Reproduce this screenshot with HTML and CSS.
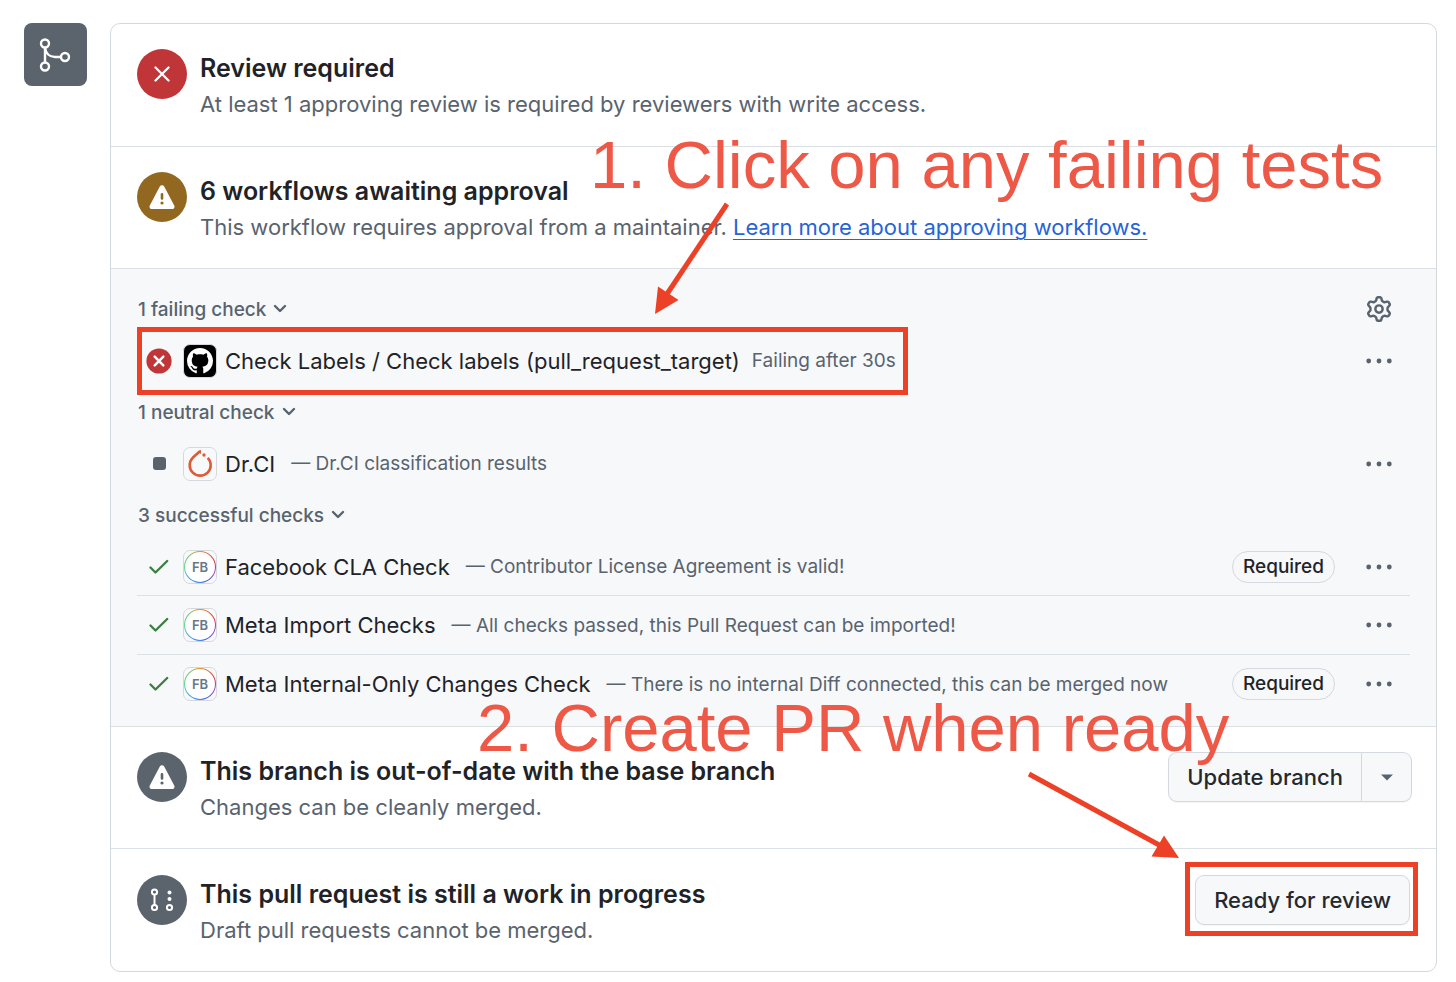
FILE: index.html
```html
<!DOCTYPE html>
<html lang="en">
<head>
<meta charset="utf-8">
<title>Merge status</title>
<link rel="stylesheet" href="styles.css">
</head>
<body>
<svg class="defs" aria-hidden="true">
  <defs>
    <symbol id="chevron" viewBox="0 0 14 10"><path d="M2 2l5 5 5-5" fill="none" stroke="currentColor" stroke-width="2.4" stroke-linecap="round" stroke-linejoin="round"/></symbol>
    <symbol id="kebab" viewBox="0 0 28 8"><circle cx="3.7" cy="4" r="2.4"/><circle cx="14" cy="4" r="2.4"/><circle cx="24.3" cy="4" r="2.4"/></symbol>
    <symbol id="check" viewBox="0 0 20 16"><path d="M1.5 8.500l5 5L18.200 2" fill="none" stroke="currentColor" stroke-width="2.3" stroke-linecap="round" stroke-linejoin="round"/></symbol>
    <symbol id="alert" viewBox="0 0 26 25"><path fill-rule="evenodd" d="M10.800 1.500a2.500 2.500 0 0 1 4.400 0L25.200 20.400a2.500 2.500 0 0 1-2.200 3.700H3a2.500 2.500 0 0 1-2.200-3.700ZM13 8a1.300 1.300 0 0 0-1.300 1.300v4.200a1.300 1.300 0 0 0 2.600 0V9.300A1.300 1.300 0 0 0 13 8Zm0 8.400a1.600 1.600 0 1 0 0 3.200 1.600 1.600 0 0 0 0-3.200Z"/></symbol>
  </defs>
</svg>

<main class="merge">
  <div class="merge-badge">
    <svg viewBox="0 0 63 63" fill="none" stroke="currentColor" stroke-width="2.4"><circle cx="21" cy="20.5" r="4"/><circle cx="21" cy="43.5" r="4"/><circle cx="41" cy="34" r="4"/><path d="M21 24.500v15M21 24.500c.6 5.700 4.500 9.500 10 9.500h6"/></svg>
  </div>

  <div class="panel">
    <section class="row">
      <span class="status status-danger"><svg class="icon-x" viewBox="0 0 16 16"><path d="M1.500 1.500l13 13M14.500 1.500l-13 13" stroke="currentColor" stroke-width="2.3" stroke-linecap="round"/></svg></span>
      <div class="row-text">
        <h2>Review required</h2>
        <p>At least 1 approving review is required by reviewers with write access.</p>
      </div>
    </section>

    <section class="row">
      <span class="status status-attention"><svg class="icon-alert"><use href="#alert"/></svg></span>
      <div class="row-text">
        <h2>6 workflows awaiting approval</h2>
        <p>This workflow requires approval from a maintainer. <a href="#">Learn more about approving workflows.</a></p>
      </div>
    </section>

    <section class="checks">
      <div class="checks-head">
        <button class="toggle">1 failing check <svg><use href="#chevron"/></svg></button>
        <button class="icon-button" aria-label="Settings"><svg class="icon-gear" viewBox="0 0 16 16"><path d="M8 0a8.200 8.200 0 0 1 .701.031C9.444.095 9.990.645 10.160 1.290l.288 1.107c.018.066.079.158.212.224.231.114.454.243.668.386.123.082.233.090.299.071l1.103-.303c.644-.176 1.392.021 1.820.630.270.385.506.792.704 1.218.315.675.111 1.422-.364 1.891l-.814.806c-.049.048-.098.147-.088.294.016.257.016.515 0 .772-.010.147.038.246.088.294l.814.806c.475.469.679 1.216.364 1.891a7.977 7.977 0 0 1-.704 1.217c-.428.610-1.176.807-1.820.630l-1.102-.302c-.067-.019-.177-.011-.300.071a5.909 5.909 0 0 1-.668.386c-.133.066-.194.158-.211.224l-.290 1.106c-.168.646-.715 1.196-1.458 1.260a8.006 8.006 0 0 1-1.402 0c-.743-.064-1.289-.614-1.458-1.260l-.289-1.106c-.018-.066-.079-.158-.212-.224a5.738 5.738 0 0 1-.668-.386c-.123-.082-.233-.090-.299-.071l-1.103.303c-.644.176-1.392-.021-1.820-.630a8.120 8.120 0 0 1-.704-1.218c-.315-.675-.111-1.422.363-1.891l.815-.806c.050-.048.098-.147.088-.294a6.214 6.214 0 0 1 0-.772c.010-.147-.038-.246-.088-.294l-.815-.806C.635 6.045.431 5.298.746 4.623a7.920 7.920 0 0 1 .704-1.217c.428-.610 1.176-.807 1.820-.630l1.102.302c.067.019.177.011.300-.071.214-.143.437-.272.668-.386.133-.066.194-.158.211-.224l.290-1.106C6.009.645 6.556.095 7.299.030 7.530.010 7.764 0 8 0Zm-.571 1.525c-.036.003-.108.036-.137.146l-.289 1.105c-.147.561-.549.967-.998 1.189-.173.086-.340.183-.500.290-.417.278-.970.423-1.529.270l-1.103-.303c-.109-.030-.175.016-.195.045-.220.312-.412.644-.573.990-.014.031-.021.110.059.190l.815.806c.411.406.562.957.530 1.456a4.709 4.709 0 0 0 0 .582c.032.499-.119 1.050-.530 1.456l-.815.806c-.081.080-.073.159-.059.190.162.346.353.677.573.989.020.030.085.076.195.046l1.102-.303c.560-.153 1.113-.008 1.530.270.161.107.328.204.501.290.447.222.850.629.997 1.189l.289 1.105c.029.109.101.143.137.146a6.600 6.600 0 0 0 1.142 0c.036-.003.108-.036.137-.146l.289-1.105c.147-.561.549-.967.998-1.189.173-.086.340-.183.500-.290.417-.278.970-.423 1.529-.270l1.103.303c.109.029.175-.016.195-.045.220-.313.411-.644.573-.990.014-.031.021-.110-.059-.190l-.815-.806c-.411-.406-.562-.957-.530-1.456a4.709 4.709 0 0 0 0-.582c-.032-.499.119-1.050.530-1.456l.815-.806c.081-.080.073-.159.059-.190a6.464 6.464 0 0 0-.573-.989c-.020-.030-.085-.076-.195-.046l-1.102.303c-.560.153-1.113.008-1.530-.270a4.440 4.440 0 0 0-.501-.290c-.447-.222-.850-.629-.997-1.189l-.289-1.105c-.029-.110-.101-.143-.137-.146a6.600 6.600 0 0 0-1.142 0ZM11 8a3 3 0 1 1-6 0 3 3 0 0 1 6 0ZM9.500 8a1.500 1.500 0 1 0-3.001.001A1.500 1.500 0 0 0 9.500 8Z"/></svg></button>
      </div>
      <ul class="check-list">
        <li class="check">
          <div class="check-main marked">
            <span class="mark"><svg class="icon-fail" viewBox="0 0 26 26"><circle cx="13" cy="13" r="12.6" fill="#bf3538"/><path d="M8.700 8.700l8.600 8.600M17.300 8.700l-8.600 8.600" stroke="#fff" stroke-width="2.5" stroke-linecap="round"/></svg></span>
            <span class="avatar avatar-github"><svg viewBox="0 0 16 16"><path d="M8 0c4.420 0 8 3.580 8 8a8.013 8.013 0 0 1-5.450 7.590c-.4.080-.55-.17-.55-.38 0-.27.010-1.130.010-2.200 0-.75-.25-1.230-.54-1.480 1.780-.2 3.650-.88 3.650-3.950 0-.88-.31-1.590-.82-2.150.080-.2.360-1.020-.08-2.120 0 0-.67-.22-2.200.820-.64-.18-1.320-.27-2-.27-.68 0-1.360.090-2 .27-1.530-1.030-2.200-.82-2.200-.82-.44 1.100-.16 1.920-.08 2.120-.51.560-.82 1.280-.82 2.150 0 3.060 1.860 3.750 3.640 3.950-.23.200-.44.550-.51 1.070-.46.210-1.610.550-2.330-.66-.15-.24-.6-.83-1.230-.82-.67.010-.27.380.010.530.340.190.730.900.820 1.130.160.450.680 1.310 2.690.940 0 .67.010 1.300.010 1.490 0 .210-.15.450-.55.380A7.995 7.995 0 0 1 0 8c0-4.420 3.580-8 8-8Z"/></svg></span>
            <span class="name">Check Labels / Check labels (pull_request_target)</span>
            <span class="desc desc-near">Failing after 30s</span>
          </div>
          <button class="icon-button" aria-label="More options"><svg class="icon-kebab"><use href="#kebab"/></svg></button>
        </li>
      </ul>

      <div class="checks-head">
        <button class="toggle">1 neutral check <svg><use href="#chevron"/></svg></button>
      </div>
      <ul class="check-list">
        <li class="check">
          <div class="check-main">
            <span class="mark"><span class="neutral"></span></span>
            <span class="avatar"><svg viewBox="0 0 32 32"><path d="M16.200 3L8.700 9.800a10.500 10.500 0 1 0 15 0" fill="none" stroke="#de5b35" stroke-width="2.6"/><path d="M14.200 4.500l2.800-3v4.500z" fill="#de5b35"/><circle cx="20" cy="7" r="1.7" fill="#de5b35"/></svg></span>
            <span class="name">Dr.CI</span>
            <span class="desc">— Dr.CI classification results</span>
          </div>
          <button class="icon-button" aria-label="More options"><svg class="icon-kebab"><use href="#kebab"/></svg></button>
        </li>
      </ul>

      <div class="checks-head">
        <button class="toggle">3 successful checks <svg><use href="#chevron"/></svg></button>
      </div>
      <ul class="check-list">
        <li class="check">
          <div class="check-main">
            <span class="mark"><svg class="icon-check"><use href="#check"/></svg></span>
            <span class="avatar"><span class="ring"><span>FB</span></span></span>
            <span class="name">Facebook CLA Check</span>
            <span class="desc">— Contributor License Agreement is valid!</span>
          </div>
          <span class="label">Required</span>
          <button class="icon-button" aria-label="More options"><svg class="icon-kebab"><use href="#kebab"/></svg></button>
        </li>
        <li class="check">
          <div class="check-main">
            <span class="mark"><svg class="icon-check"><use href="#check"/></svg></span>
            <span class="avatar"><span class="ring"><span>FB</span></span></span>
            <span class="name">Meta Import Checks</span>
            <span class="desc">— All checks passed, this Pull Request can be imported!</span>
          </div>
          <button class="icon-button" aria-label="More options"><svg class="icon-kebab"><use href="#kebab"/></svg></button>
        </li>
        <li class="check">
          <div class="check-main">
            <span class="mark"><svg class="icon-check"><use href="#check"/></svg></span>
            <span class="avatar"><span class="ring"><span>FB</span></span></span>
            <span class="name">Meta Internal-Only Changes Check</span>
            <span class="desc">— There is no internal Diff connected, this can be merged now</span>
          </div>
          <span class="label">Required</span>
          <button class="icon-button" aria-label="More options"><svg class="icon-kebab"><use href="#kebab"/></svg></button>
        </li>
      </ul>
    </section>

    <section class="row">
      <span class="status"><svg class="icon-alert"><use href="#alert"/></svg></span>
      <div class="row-text">
        <h2>This branch is out-of-date with the base branch</h2>
        <p>Changes can be cleanly merged.</p>
      </div>
      <div class="button-group">
        <button class="button">Update branch</button><button class="button button-caret" aria-label="Update options"><svg viewBox="0 0 12 7"><path d="M0 .5h12L6 6.500z"/></svg></button>
      </div>
    </section>

    <section class="row row-last">
      <span class="status"><svg class="icon-draft" viewBox="0 0 24 24"><g fill="none" stroke="currentColor" stroke-width="2"><circle cx="4.5" cy="4" r="2.6"/><circle cx="4.5" cy="19.5" r="2.6"/><circle cx="19.5" cy="19.5" r="2.6"/><path d="M4.500 6.500v10.500"/></g><circle cx="19.5" cy="4.5" r="2"/><circle cx="19.5" cy="11" r="2"/></svg></span>
      <div class="row-text">
        <h2>This pull request is still a work in progress</h2>
        <p>Draft pull requests cannot be merged.</p>
      </div>
      <div class="ready"><button class="button">Ready for review</button></div>
    </section>

    <div class="note note-one">1. Click on any failing tests</div>
    <div class="note note-two">2. Create PR when ready</div>
    <svg class="arrow arrow-one" viewBox="0 0 76 114"><path d="M72 2L12 92" stroke="#ec4126" stroke-width="5"/><path d="M0 112L3 84.500 23.500 98z" fill="#ec4126"/></svg>
    <svg class="arrow arrow-two" viewBox="0 0 154 90"><path d="M2 4L134 76" stroke="#ec4126" stroke-width="5"/><path d="M152 88l-27.500-1.500L137 65.500z" fill="#ec4126"/></svg>
  </div>
</main>
</body>
</html>
```
FILE: styles.css
```css
* {
  box-sizing: border-box;
}

body {
  margin: 0;
  background: #fff;
  color: #1f2328;
  font-family: Inter, "Liberation Sans", sans-serif;
  font-size: 22px;
}

svg {
  display: block;
  fill: currentColor;
}

.defs {
  position: absolute;
  width: 0;
  height: 0;
}

.merge {
  display: flex;
  align-items: flex-start;
  gap: 23px;
  padding: 23px 19px 10px 24px;
}

.merge-badge {
  width: 63px;
  height: 63px;
  flex: none;
  border-radius: 8px;
  background: #5b636d;
  color: #fff;
}

.merge-badge svg {
  fill: none;
}

.panel {
  position: relative;
  flex: 1;
  min-width: 0;
  border: 1px solid #d4d9df;
  border-radius: 10px;
}

.row {
  display: flex;
  gap: 13px;
  padding: 25px 24px 24px 26px;
}

.row:first-child {
  padding-bottom: 25px;
}

.row-last {
  padding-top: 26px;
}

.row + .row,
.checks,
.checks + .row {
  border-top: 1px solid #dbe0e5;
}

.status {
  display: flex;
  align-items: center;
  justify-content: center;
  flex: none;
  width: 50px;
  height: 50px;
  border-radius: 50%;
  background: #5b636d;
  color: #fff;
}

.status-danger {
  background: #bf3538;
}

.status-attention {
  background: #926820;
}

.icon-x {
  width: 16px;
  height: 16px;
}

.icon-alert {
  width: 26px;
  height: 25px;
}

.icon-draft {
  width: 24px;
  height: 24px;
}

.row-text {
  flex: 1;
  min-width: 0;
}

h2 {
  margin: 0;
  font-size: 25px;
  font-weight: 600;
  line-height: 38px;
}

p {
  margin: 0;
  color: #59636e;
  line-height: 34px;
}

a {
  color: #2664d8;
  text-decoration: underline;
  text-decoration-thickness: 1px;
  text-underline-offset: 4px;
}

button {
  margin: 0;
  border: 0;
  background: none;
  color: inherit;
  font: inherit;
}

.checks {
  padding: 17px 26px 13px;
  background: #f6f8fa;
  color: #1f2328;
}

.checks-head {
  display: flex;
  align-items: center;
  justify-content: space-between;
  height: 46px;
  padding: 0 9px 0 1px;
}

.toggle {
  display: flex;
  align-items: center;
  gap: 7px;
  padding: 0;
  color: #59636e;
  font-size: 19px;
  font-weight: 500;
}

.toggle svg {
  width: 14px;
  height: 10px;
}

.icon-button {
  display: flex;
  align-items: center;
  justify-content: center;
  flex: none;
  width: 44px;
  height: 32px;
  padding: 0;
  color: #59636e;
}

.icon-gear {
  width: 26px;
  height: 26px;
}

.icon-kebab {
  width: 28px;
  height: 8px;
}

.check-list {
  margin: 0;
  padding: 0;
  list-style: none;
}

.check {
  display: flex;
  align-items: center;
  gap: 22px;
  height: 57px;
  padding: 0 9px;
}

.check + .check {
  height: 59px;
  border-top: 1px solid #dbe0e5;
}

.check-main {
  display: flex;
  align-items: center;
  margin-right: auto;
  white-space: nowrap;
}

.marked {
  position: relative;
}

.marked::after {
  position: absolute;
  inset: -17px -12px -17px -9px;
  border: 5px solid #ec4126;
  content: "";
}

.mark {
  display: flex;
  justify-content: center;
  width: 26px;
  margin-right: 11px;
}

.icon-fail {
  width: 26px;
  height: 26px;
}

.icon-check {
  width: 20px;
  height: 16px;
  color: #3b7f3f;
}

.neutral {
  width: 13px;
  height: 13px;
  border-radius: 3px;
  background: #59636e;
}

.avatar {
  display: flex;
  align-items: center;
  justify-content: center;
  width: 34px;
  height: 34px;
  margin-right: 8px;
  border: 1px solid #d5d9de;
  border-radius: 7px;
  background: #f8f9fb;
}

.avatar svg {
  width: 32px;
  height: 32px;
}

.avatar-github {
  background: #000;
  color: #fff;
}

.avatar-github svg {
  width: 26px;
  height: 26px;
}

.ring {
  display: flex;
  width: 32px;
  height: 32px;
  padding: 1px;
  border-radius: 50%;
  background: conic-gradient(#e5912e, #df3a30 60deg, #c03bc0 100deg, #3f63e0 150deg, #45a0f5 220deg, #63d988 270deg, #62c96b 310deg, #e5912e);
}

.ring span {
  flex: 1;
  border-radius: 50%;
  background: #fff;
  color: #67778a;
  font-size: 13px;
  font-weight: 600;
  line-height: 30px;
  text-align: center;
}

.desc {
  margin-left: 16px;
  color: #59636e;
  font-size: 19px;
}

.desc-near {
  margin-left: 12px;
}

.label {
  flex: none;
  padding: 0 10px;
  border: 1px solid #d4d9df;
  border-radius: 16px;
  font-size: 19px;
  font-weight: 500;
  line-height: 30px;
}

.button {
  height: 50px;
  padding: 0 18px;
  border: 1px solid #d4d9df;
  border-radius: 9px;
  background: #f6f8fa;
  box-shadow: 0 1px 1px #1f23280a;
  color: #25292e;
  font-weight: 500;
}

.button-group {
  display: flex;
}

.button-group .button:first-child {
  border-radius: 9px 0 0 9px;
}

.button-group .button-caret {
  width: 50px;
  border-left: 0;
  border-radius: 0 9px 9px 0;
}

.button-caret svg {
  width: 12px;
  height: 7px;
  margin: 0 auto;
  color: #59636e;
}

.ready {
  position: relative;
  align-self: flex-start;
  margin-right: 2px;
}

.ready::after {
  position: absolute;
  inset: -13px -8px -11px -10px;
  border: 5px solid #ec4126;
  content: "";
  pointer-events: none;
}

.note {
  position: absolute;
  color: #ed5847;
  font-family: "Liberation Sans", Arial, sans-serif;
  font-size: 67px;
  line-height: 76px;
  white-space: nowrap;
}

.note-one {
  top: 103px;
  left: 479px;
}

.note-two {
  top: 666px;
  left: 366px;
}

.arrow {
  position: absolute;
}

.arrow-one {
  top: 178px;
  left: 544px;
  width: 76px;
  height: 114px;
}

.arrow-two {
  top: 746px;
  left: 916px;
  width: 154px;
  height: 90px;
}
```
